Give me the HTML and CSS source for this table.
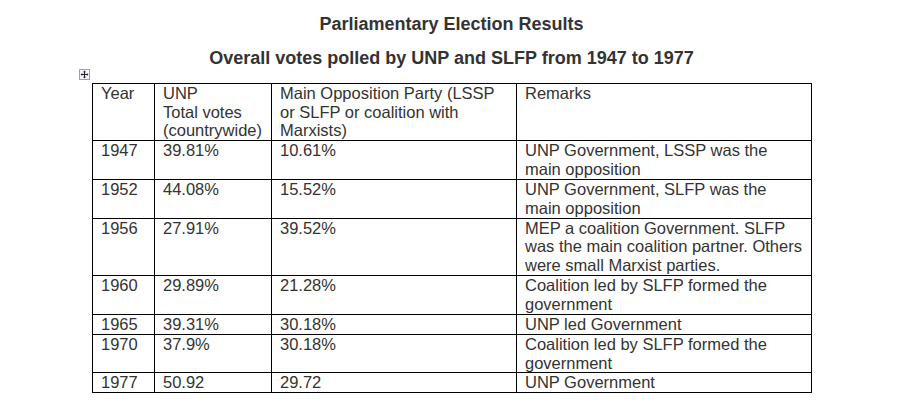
FILE: index.html
```html
<!DOCTYPE html>
<html lang="en">
<head>
<meta charset="utf-8">
<title>Parliamentary Election Results</title>
<link rel="stylesheet" href="styles.css">
</head>
<body>
<div class="doc">
  <h1 class="title">Parliamentary Election Results</h1>
  <h2 class="subtitle">Overall votes polled by UNP and SLFP from 1947 to 1977</h2>
  <div class="table-wrap">
    <span class="move-handle">
      <svg viewBox="0 0 11 11" width="11" height="11">
        <rect x="0.5" y="0.5" width="10" height="10" fill="#f4f6fb" stroke="#8ea3c6"/>
        <path d="M5.5 2.2v6.6M2.2 5.5h6.6" stroke="#222" stroke-width="1" fill="none"/>
        <path d="M5.5 1.6l-1.5 1.6h3z M5.5 9.4l-1.5-1.6h3z M1.6 5.5l1.6-1.5v3z M9.4 5.5l-1.6-1.5v3z" fill="#222"/>
      </svg>
    </span>
    <table class="results">
      <colgroup>
        <col class="c-year">
        <col class="c-unp">
        <col class="c-opp">
        <col class="c-rem">
      </colgroup>
      <tr>
        <td>Year</td>
        <td>UNP<br>Total votes<br>(countrywide)</td>
        <td>Main Opposition Party (LSSP<br>or SLFP or coalition with<br>Marxists)</td>
        <td>Remarks</td>
      </tr>
      <tr>
        <td>1947</td>
        <td>39.81%</td>
        <td>10.61%</td>
        <td>UNP Government, LSSP was the<br>main opposition</td>
      </tr>
      <tr>
        <td>1952</td>
        <td>44.08%</td>
        <td>15.52%</td>
        <td>UNP Government, SLFP was the<br>main opposition</td>
      </tr>
      <tr>
        <td>1956</td>
        <td>27.91%</td>
        <td>39.52%</td>
        <td>MEP a coalition Government. SLFP<br>was the main coalition partner. Others<br>were small Marxist parties.</td>
      </tr>
      <tr>
        <td>1960</td>
        <td>29.89%</td>
        <td>21.28%</td>
        <td>Coalition led by SLFP formed the<br>government</td>
      </tr>
      <tr>
        <td>1965</td>
        <td>39.31%</td>
        <td>30.18%</td>
        <td>UNP led Government</td>
      </tr>
      <tr>
        <td>1970</td>
        <td>37.9%</td>
        <td>30.18%</td>
        <td>Coalition led by SLFP formed the<br>government</td>
      </tr>
      <tr>
        <td>1977</td>
        <td>50.92</td>
        <td>29.72</td>
        <td>UNP Government</td>
      </tr>
    </table>
    <span class="resize-handle"></span>
  </div>
</div>
</body>
</html>
```

FILE: styles.css
```css
html, body {
  margin: 0;
  padding: 0;
  background: #ffffff;
}

body {
  font-family: "Liberation Sans", Arial, sans-serif;
  color: #333333;
}

.doc {
  margin-left: 92px;
  width: 719px;
  padding-top: 13.6px;
}

.title,
.subtitle {
  margin: 0;
  font-size: 18px;
  font-weight: bold;
  line-height: 20.7px;
  text-align: center;
  color: #333333;
}

.subtitle {
  margin-top: 13.7px;
}

.table-wrap {
  position: relative;
  margin-top: 14px;
}

.move-handle {
  position: absolute;
  left: -13px;
  top: -14px;
  width: 11px;
  height: 11px;
  display: block;
}

.move-handle svg {
  display: block;
}

.resize-handle {
  position: absolute;
  right: -9px;
  bottom: -7px;
  width: 5px;
  height: 5px;
  border: 1px solid #7f9ccc;
  background: #ffffff;
}

.results {
  border-collapse: collapse;
  table-layout: fixed;
  width: 719px;
  font-size: 16.5px;
  line-height: 18.85px;
}

.c-year { width: 62px; }
.c-unp { width: 117px; }
.c-opp { width: 245px; }
.c-rem { width: 295px; }

.results td {
  border: 1px solid #000000;
  padding: 0 4px 0 8px;
  vertical-align: top;
  white-space: nowrap;
  overflow: visible;
}
```
